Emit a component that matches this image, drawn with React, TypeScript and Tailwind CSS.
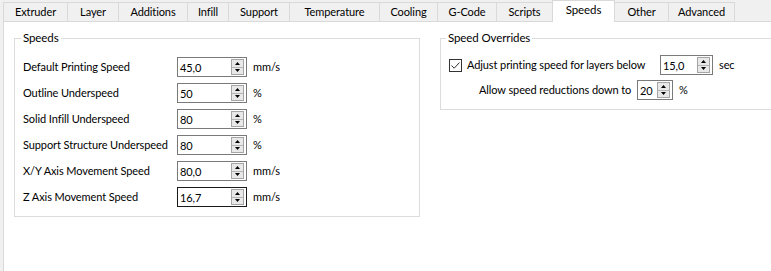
import React from 'react';

const tabs = [
  { name: 'Extruder', w: 65 },
  { name: 'Layer', w: 52 },
  { name: 'Additions', w: 70 },
  { name: 'Infill', w: 42 },
  { name: 'Support', w: 62 },
  { name: 'Temperature', w: 91 },
  { name: 'Cooling', w: 59 },
  { name: 'G-Code', w: 60 },
  { name: 'Scripts', w: 57 },
  { name: 'Speeds', w: 63 },
  { name: 'Other', w: 55 },
  { name: 'Advanced', w: 67 },
];

const speedRows = [
  { label: 'Default Printing Speed', value: '45,0', unit: 'mm/s' },
  { label: 'Outline Underspeed', value: '50', unit: '%' },
  { label: 'Solid Infill Underspeed', value: '80', unit: '%' },
  { label: 'Support Structure Underspeed', value: '80', unit: '%' },
  { label: 'X/Y Axis Movement Speed', value: '80,0', unit: 'mm/s' },
  { label: 'Z Axis Movement Speed', value: '16,7', unit: 'mm/s', focused: true },
];

const SpinButtons: React.FC = () => (
  <div className="mr-[2px] flex h-[16px] w-[13px] flex-col border border-[#a5a5a5] bg-[#e8e8e8]">
    <div className="flex flex-1 items-center justify-center border-b border-[#b5b5b5]">
      <svg width="5" height="3" viewBox="0 0 5 3">
        <path d="M2.5 0 L5 3 L0 3 Z" fill="#000" />
      </svg>
    </div>
    <div className="flex flex-1 items-center justify-center">
      <svg width="5" height="3" viewBox="0 0 5 3">
        <path d="M0 0 L5 0 L2.5 3 Z" fill="#000" />
      </svg>
    </div>
  </div>
);

const SpinBox: React.FC<{ value: string; width: string; focused?: boolean }> = ({ value, width, focused }) => (
  <div
    className={`flex h-[20px] shrink-0 items-center border bg-white ${width} ${focused ? 'border-[#1a1a1a]' : 'border-[#7a7a7a]'}`}
  >
    <span className="flex-1 pl-[2px] leading-none">{value}</span>
    <SpinButtons />
  </div>
);

const App: React.FC = () => {
  return (
    <div
      className="flex h-[271px] w-[771px] flex-col overflow-hidden whitespace-nowrap bg-[#f0f0f0] text-[11px] tracking-[-0.1px] text-black"
      style={{ fontFamily: 'Lato, "Noto Sans", sans-serif' }}
    >
      {/* Tab bar */}
      <div className="flex h-[21px] shrink-0 items-end pl-[3px]">
        {tabs.map((t, i) => {
          const active = t.name === 'Speeds';
          return (
            <div
              key={t.name}
              style={{ width: t.w }}
              className={`flex shrink-0 items-center justify-center border-x border-t border-[#d9d9d9] ${
                i > 0 ? '-ml-px' : ''
              } ${active ? 'relative z-10 -mb-px h-[22px] bg-white pb-[3px] text-[11.5px]' : 'h-[19px] bg-[#f0f0f0]'}`}
            >
              {t.name}
            </div>
          );
        })}
      </div>

      {/* Page */}
      <div className="ml-[3px] flex w-[900px] flex-1 items-start gap-[20px] border-l border-t border-[#d9d9d9] bg-white pl-[10px] pt-[8px]">
        {/* Speeds group */}
        <fieldset className="w-[406px] border border-[#dcdcdc] pb-[9px] pl-[8px] pt-[11px]">
          <legend className="ml-[-2px] px-[2px] text-[11.5px] leading-[16px]">Speeds</legend>
          <div className="flex flex-col gap-[6px]">
            {speedRows.map((r) => (
              <div key={r.label} className="flex h-[20px] items-center">
                <span className="w-[154px] shrink-0">{r.label}</span>
                <SpinBox value={r.value} width="w-[70px]" focused={r.focused} />
                <span className="ml-[6px]">{r.unit}</span>
              </div>
            ))}
          </div>
        </fieldset>

        {/* Speed Overrides group */}
        <fieldset className="w-[420px] border border-[#dcdcdc] pb-[9px] pl-[8px] pt-[9px]">
          <legend className="ml-[-3px] px-[2px] text-[11.5px] leading-[16px]">Speed Overrides</legend>
          <div className="flex flex-col gap-[5px]">
            <div className="flex h-[20px] items-center">
              <span className="flex h-[13px] w-[13px] shrink-0 items-center justify-center border border-[#333] bg-white">
                <svg width="11" height="11" viewBox="0 0 11 11">
                  <path d="M1.5 5.5 L4.2 8.2 L9.5 2.5" fill="none" stroke="#333" strokeWidth="1" />
                </svg>
              </span>
              <span className="ml-[5px] w-[193px] shrink-0">Adjust printing speed for layers below</span>
              <SpinBox value="15,0" width="w-[53px]" />
              <span className="ml-[6px]">sec</span>
            </div>
            <div className="flex h-[20px] items-center pl-[30px]">
              <span className="w-[158px] shrink-0">Allow speed reductions down to</span>
              <SpinBox value="20" width="w-[36px]" />
              <span className="ml-[6px]">%</span>
            </div>
          </div>
        </fieldset>
      </div>
    </div>
  );
};

export default App;
